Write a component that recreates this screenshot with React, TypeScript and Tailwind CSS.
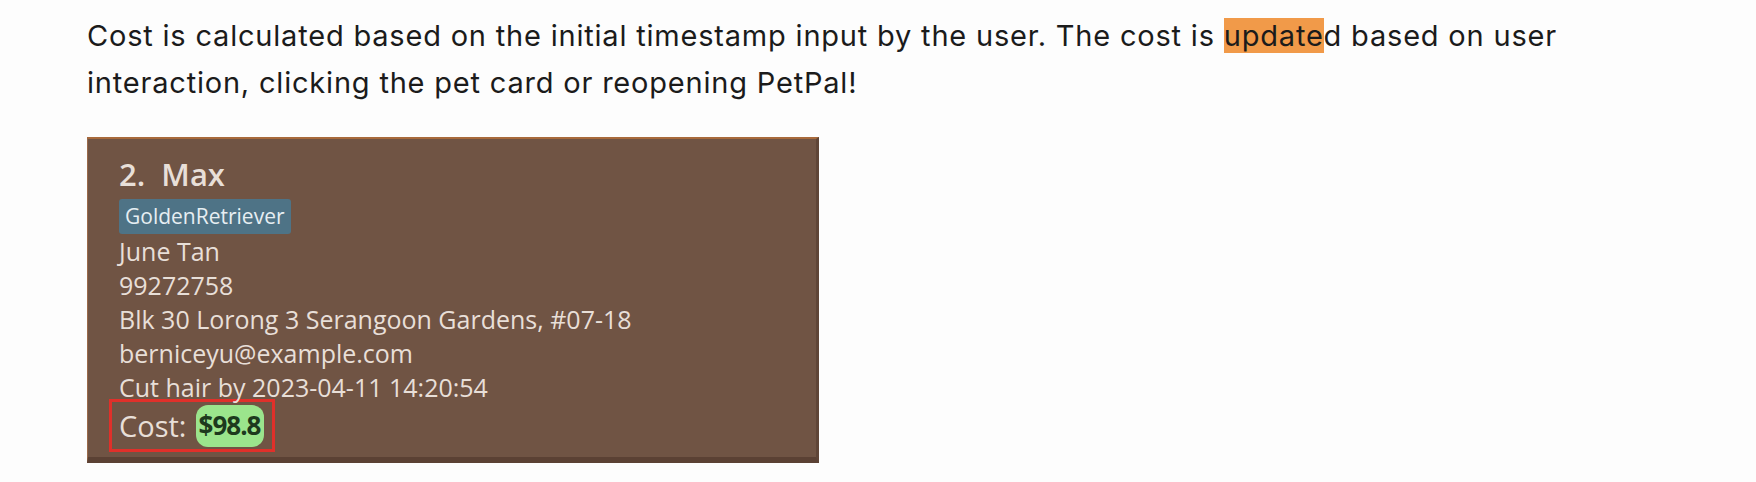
import React from 'react';

const details = [
  'June Tan',
  '99272758',
  'Blk 30 Lorong 3 Serangoon Gardens, #07-18',
  'berniceyu@example.com',
  'Cut hair by 2023-04-11 14:20:54',
];

function PetCard() {
  return (
    <div className="box-border h-[326px] w-[732px] border-t-2 border-r-[3px] border-b-[6px] border-l border-t-[#a86a3c] border-r-[#5f4537] border-b-[#5b4134] border-l-[#9a6a4a] bg-[#705444] pt-[17px] pl-[31px] font-['Open_Sans',sans-serif] text-[#e8dfd8]">
      <div className="text-[31px] font-semibold leading-[36px] whitespace-pre">2.  Max</div>
      <div className="mt-[7px] flex">
        <span className="h-[35px] rounded-[3px] bg-[#4e7386] px-[6px] text-[21px] leading-[35px] text-[#e6eef2]">
          GoldenRetriever
        </span>
      </div>
      {details.map((line) => (
        <div key={line} className="text-[25px] leading-[34px]">
          {line}
        </div>
      ))}
      <div className="-mt-[5px] -ml-[10px] flex h-[53px] w-[166px] items-center border-[3px] border-[#e0302a] pl-[7px]">
        <span className="text-[29px] leading-none">Cost:</span>
        <span className="ml-[9px] flex h-[42px] w-[68px] items-center justify-center rounded-[12px] bg-[#9be58c] text-[26px] font-bold tracking-[-1px] text-[#1d3a1d]">
          $98.8
        </span>
      </div>
    </div>
  );
}

export default function App() {
  return (
    <div className="min-h-screen bg-[#fdfdfd] pt-[12px] pl-[87px]">
      <p className="w-[1520px] font-['Inter',sans-serif] text-[29px] leading-[47px] tracking-[0.8px] text-[#1b1b1b]">
        Cost is calculated based on the initial timestamp input by the user. The cost is{' '}
        <span className="bg-[#f19a49]">update</span>d based on user interaction, clicking the pet card or reopening
        PetPal!
      </p>
      <div className="mt-[31px]">
        <PetCard />
      </div>
    </div>
  );
}
